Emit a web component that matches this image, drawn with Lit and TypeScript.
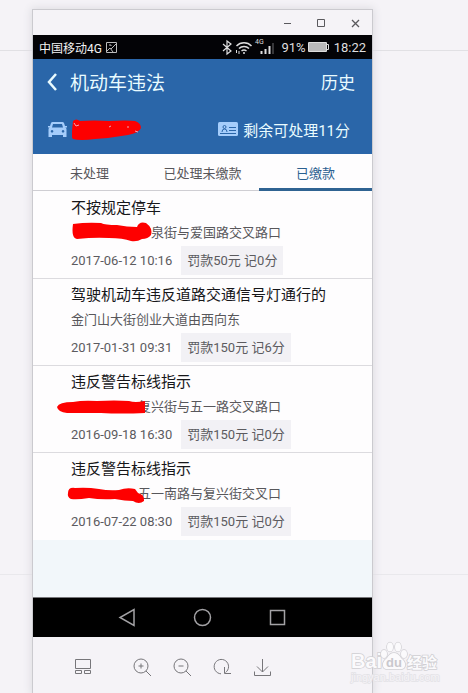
import { LitElement, css, html, svg, nothing } from "lit";
import { customElement, property, state } from "lit/decorators.js";
import { classMap } from "lit/directives/class-map.js";

interface Violation {
  title: string;
  place: string;
  time: string;
  penalty: string;
  mark?: string;
  wide?: boolean;
}

const violations: Violation[] = [
  {
    title: "不按规定停车",
    place: "泉街与爱国路交叉路口",
    time: "2017-06-12 10:16",
    penalty: "罚款50元 记0分",
    mark: "M2 3Q16 1 30 2Q34 4 46 4Q56 6 66 6Q68 0 75 2Q82 7 80 14Q77 18 71 18Q66 21 60 20Q52 17 38 17Q24 16 6 18Q0 17 2 3Z",
    wide: true,
  },
  {
    title: "驾驶机动车违反道路交通信号灯通行的",
    place: "金门山大街创业大道由西向东",
    time: "2017-01-31 09:31",
    penalty: "罚款150元 记6分",
  },
  {
    title: "违反警告标线指示",
    place: "复兴街与五一路交叉路口",
    time: "2016-09-18 16:30",
    penalty: "罚款150元 记0分",
    mark: "M-14 12Q-12 7 2 7Q12 5 26 6Q44 5 58 6Q64 8 74 6L74 18Q50 19 30 18Q10 18 -4 18Q-13 17 -14 12Z",
  },
  {
    title: "违反警告标线指示",
    place: "五一南路与复兴街交叉口",
    time: "2016-07-22 08:30",
    penalty: "罚款150元 记0分",
    mark: "M-3 11Q-3 5 4 6Q16 5 28 7Q38 9 48 8Q56 5 64 7L67 11Q74 13 73 19Q68 23 62 19Q54 19 44 17Q30 18 18 16Q6 18 0 17Q-4 15 -3 11Z",
  },
];

@customElement("violation-row")
class ViolationRow extends LitElement {
  @property({ attribute: false }) item!: Violation;

  static styles = css`
    :host {
      display: block;
      padding: 4px 12px 3px 38px;
      background: #fefdfe;
      border-bottom: 1px solid #dcdbdf;
    }
    :host(:last-child) {
      border-color: #fefdfe;
    }
    .title {
      margin: 0;
      font-size: 15px;
      font-weight: 400;
      line-height: 24px;
      color: #17171a;
      white-space: nowrap;
    }
    .place {
      position: relative;
      display: flex;
      margin: 1px 0;
      font-size: 13px;
      line-height: 24px;
      color: #58575b;
      white-space: nowrap;
    }
    .hidden {
      flex: none;
      width: 67px;
    }
    .wide {
      width: 80px;
    }
    .mark {
      position: absolute;
      left: 0;
      top: 0;
      width: 80px;
      height: 24px;
      overflow: visible;
      fill: #fe0000;
    }
    .meta {
      display: flex;
      align-items: center;
      gap: 9px;
      font-size: 13px;
      line-height: 29px;
      color: #5c5b5f;
      white-space: nowrap;
    }
    .penalty {
      padding: 0 6px;
      background: #f2f1f5;
    }
  `;

  render() {
    const v = this.item;
    return html`
      <h2 class="title">${v.title}</h2>
      <p class="place">
        ${v.mark
          ? html`<span class=${classMap({ hidden: true, wide: !!v.wide })}></span>
              <svg class="mark" viewBox="0 0 80 24" aria-hidden="true"><path d=${v.mark} /></svg>`
          : nothing}
        <span>${v.place}</span>
      </p>
      <div class="meta">
        <time>${v.time}</time>
        <span class="penalty">${v.penalty}</span>
      </div>
    `;
  }
}

const tools = [
  { name: "布局", art: svg`<path d="M1.500 1.500h15v9h-15zM1.500 12.500h6v3h-6zM10.500 12.500h6v3h-6z" />` },
  { name: "放大", art: svg`<circle cx="8" cy="8" r="7" /><path d="M13 13l5 5M8 5.500v5M5.500 8h5" />` },
  { name: "缩小", art: svg`<circle cx="8" cy="8" r="7" /><path d="M13 13l5 5M5.500 8h5" />` },
  { name: "旋转", art: svg`<path d="M8 15.800A7.200 7.200 0 1 1 12.500 14.500M11.500 9V15.500H18" />` },
  { name: "下载", art: svg`<path d="M9.500 1v13M4 8.500L9.500 14l5.500-5.500M1.500 13.500v4h16v-4" />` },
];

@customElement("app-root")
class AppRoot extends LitElement {
  @state() private tab = 2;

  static styles = css`
    :host {
      display: flex;
      box-sizing: border-box;
      min-height: 100vh;
      position: relative;
      padding: 10px 96px 0 33px;
      background:
        linear-gradient(#e1e0e4, #e1e0e4) 0 50px / 100% 1px no-repeat,
        linear-gradient(#e9e8ec, #e9e8ec) 0 calc(100% - 118px) / 100% 1px no-repeat,
        #f5f3f7;
      font-family: Roboto, "Noto Sans CJK SC", sans-serif;
    }
    * {
      box-sizing: border-box;
    }
    button {
      padding: 0;
      border: 0;
      background: none;
      color: inherit;
      font: inherit;
      cursor: pointer;
    }
    svg {
      display: block;
      flex: none;
    }
    .window {
      flex: 1;
      min-width: 0;
      display: flex;
      flex-direction: column;
      background: #f5f3f7;
      box-shadow: 0 0 0 1px #cbcacf, 0 0 8px 2px #dddce1;
    }
    .titlebar {
      display: flex;
      justify-content: flex-end;
      align-items: center;
      gap: 16px;
      height: 25px;
      padding-right: 8px;
    }
    .line {
      fill: none;
      stroke: #5a595d;
    }
    .status {
      display: flex;
      align-items: center;
      height: 24px;
      padding: 0 6px;
      background: #030306;
      color: #dededf;
      font-size: 13px;
      white-space: nowrap;
    }
    .carrier {
      flex: 1;
      display: flex;
      align-items: center;
      gap: 4px;
      font-size: 12px;
      color: #f2f2f2;
    }
    .signals {
      margin-right: 7px;
    }
    .battery {
      margin: 0 5px 0 2px;
    }
    .header {
      background: #2a66a9;
      color: #e9fbff;
      white-space: nowrap;
    }
    .bar {
      display: flex;
      align-items: center;
      height: 45px;
      padding: 0 17px 0 12px;
    }
    .back {
      width: 25px;
      height: 24px;
    }
    .heading {
      flex: 1;
      margin: 0;
      font-size: 19px;
      font-weight: 400;
    }
    .history {
      font-size: 17px;
    }
    .info {
      display: flex;
      align-items: center;
      justify-content: space-between;
      height: 50px;
      padding: 0 22px 0 15px;
      font-size: 15px;
    }
    .group {
      display: flex;
      align-items: center;
      gap: 5px;
    }
    .tabs {
      display: grid;
      grid-template-columns: repeat(3, 1fr);
      height: 37px;
      background: #fefdfe;
      box-shadow: inset 0 -1px #cfced3;
    }
    .tab {
      font-size: 13px;
      color: #58575b;
      border-bottom: 3px solid transparent;
      padding-top: 2px;
    }
    .active {
      color: #2b6090;
      border-color: #2f6392;
    }
    .list {
      flex: 1;
      background: #f2f7fa;
      border-top: 1px solid #fefdfe;
    }
    .nav {
      display: flex;
      justify-content: center;
      align-items: center;
      gap: 56px;
      height: 40px;
      background: #000;
      border-top: 1px solid #77777a;
    }
    .nav .line {
      stroke: #a3a2a5;
      stroke-width: 1.5;
    }
    .tools {
      display: flex;
      align-items: center;
      gap: 22px;
      height: 56px;
      padding: 4px 0 0 41px;
    }
    .tools .line {
      stroke: #77767a;
      overflow: visible;
    }
    .tool:first-child {
      margin-right: 19px;
    }
    .watermark {
      position: absolute;
      right: 28px;
      bottom: 7px;
      width: 90px;
      height: 48px;
      overflow: visible;
      fill: #fbfafc;
      stroke: #d0cfd3;
      stroke-width: 1.5;
      paint-order: stroke;
      font-family: "Liberation Sans", "Noto Sans CJK SC", sans-serif;
      font-weight: 700;
      pointer-events: none;
    }
    .brand {
      font-size: 20px;
    }
    .du {
      font-size: 13px;
      fill: #c9c8cd;
      stroke: none;
    }
    .cn {
      font-size: 15px;
    }
    .url {
      font-size: 11px;
      font-weight: 400;
      fill: #f5f3f7;
      stroke: #e3e2e6;
    }
  `;

  render() {
    return html`
      <main class="window">
        <div class="titlebar">
          <button aria-label="最小化"><svg class="line" width="18" height="18"><path d="M6 9.500h7" /></svg></button>
          <button aria-label="最大化"><svg class="line" width="18" height="18"><path d="M5.500 5.500h7v7h-7z" /></svg></button>
          <button aria-label="关闭"><svg class="line" width="18" height="18"><path d="M6 6l7 7M13 6l-7 7" stroke-width="1.300" /></svg></button>
        </div>

        <div class="status">
          <span class="carrier">
            中国移动4G
            <svg width="11" height="11" fill="none" stroke="#bbb"><path d="M.5.5h10v10H.5zM1 9l3-3 3 4M5 7l5-5M3 3h2v1" /></svg>
          </span>
          <svg class="signals" width="52" height="22" fill="none" stroke="#dededf">
            <path d="M1 8l8 7-4 3V5l4 3-8 7" stroke-width="1.200" />
            <path d="M14.500 10a10.500 10.500 0 0 1 15 0M17 12.500a7 7 0 0 1 10 0M19.500 15a4 4 0 0 1 5 0" stroke-width="1.500" />
            <path d="M14.500 17v-3M17 15v3" />
            <circle cx="22" cy="17" r="1" fill="#dededf" stroke="none" />
            <path d="M39.500 18v-3M43.500 18v-5M47.500 18v-8" stroke-width="2" />
            <path d="M51 18V7" stroke="#4a4a4d" stroke-width="1.500" />
            <text x="33" y="8" font-size="7" fill="#dededf" stroke="none">4G</text>
          </svg>
          <span>91%</span>
          <svg class="battery" width="21" height="12"><path d="M.5 1.500h18v9H.5zM19 3.500h1.500v5H19" fill="none" stroke="#ddd" /><path d="M1 2h17v8H1z" fill="#b9b9ba" /></svg>
          <span>18:22</span>
        </div>

        <header class="header">
          <div class="bar">
            <button class="back" aria-label="返回">
              <svg width="14" height="22" fill="none" stroke="#e9fbff" stroke-width="2.500"><path d="M11 3L4 11l7 8" /></svg>
            </button>
            <h1 class="heading">机动车违法</h1>
            <button class="history">历史</button>
          </div>
          <div class="info">
            <span class="group">
              <svg width="19" height="18" fill="#a5cdfb">
                <path fill-rule="evenodd" d="M4.500 2h10q1 0 1.500 1l1.500 4.500q1 .5 1 2V17h-3.500v-2h-11v2H.5V9.500q0-1.500 1-2L3 3q.5-1 1.500-1zM5 4L4 7.500h11L14 4zM4 10a1.300 1.300 0 1 0 .1 0zM15 10a1.300 1.300 0 1 0 .1 0z" />
                <path d="M0 6h2v1.500H0zM17 6h2v1.500h-2z" />
              </svg>
              <svg width="72" height="24" aria-hidden="true">
                <path d="M1 4Q4 1 8 4Q22 3 37 4Q55 3 63 4Q69 6 69 11Q67 16 56 18Q39 21 23 22Q8 24 1 22Q-1 20 0 14Z" fill="#fe0000" />
                <path d="M2 6l2 3 3-1M37 10l2-1M55 10h2M63 14l3 1" fill="none" stroke="#f0a4b4" />
              </svg>
            </span>
            <span class="group">
              <svg width="20" height="14" fill="none" stroke="#2a66a9">
                <rect width="20" height="14" rx="1.500" fill="#a5cdfb" stroke="none" />
                <circle cx="6.500" cy="5" r="1.500" /><path d="M4 10q0-3 2.500-3T9 10M11 5.500h7M11 8.500h7M2 11.500h16" />
              </svg>
              剩余可处理11分
            </span>
          </div>
        </header>

        <nav class="tabs">
          ${["未处理", "已处理未缴款", "已缴款"].map(
            (label, i) => html`<button
              class=${classMap({ tab: true, active: i === this.tab })}
              @click=${() => (this.tab = i)}
            >${label}</button>`
          )}
        </nav>

        <section class="list">
          ${violations.map((v) => html`<violation-row .item=${v}></violation-row>`)}
        </section>

        <nav class="nav">
          <button aria-label="后退"><svg class="line" width="19" height="19"><path d="M16 1.500v16L2 9.500z" /></svg></button>
          <button aria-label="主页"><svg class="line" width="19" height="19"><circle cx="9.500" cy="9.500" r="8" /></svg></button>
          <button aria-label="最近"><svg class="line" width="19" height="19"><path d="M2.500 2.500h14v14h-14z" /></svg></button>
        </nav>

        <div class="tools">
          ${tools.map(
            (t) => html`<button class="tool" aria-label=${t.name}><svg class="line" width="18" height="18">${t.art}</svg></button>`
          )}
        </div>
      </main>

      <svg class="watermark" viewBox="0 0 90 48" aria-label="Baidu 经验">
        <text class="brand" x="1" y="30">Bai</text>
        <ellipse cx="34" cy="16" rx="3" ry="4" />
        <ellipse cx="40" cy="9" rx="3" ry="4.500" />
        <ellipse cx="48" cy="9" rx="3" ry="4.500" />
        <ellipse cx="54" cy="16" rx="3" ry="4" />
        <path d="M44 15q4 0 7 5 5 4 4 8t-7 3h-8q-6 1-7-3t4-8q3-5 7-5z" />
        <text class="du" x="36" y="29">du</text>
        <text class="cn" x="57" y="30">经验</text>
        <text class="url" x="1" y="43">jingyan.baidu.com</text>
      </svg>
    `;
  }
}
